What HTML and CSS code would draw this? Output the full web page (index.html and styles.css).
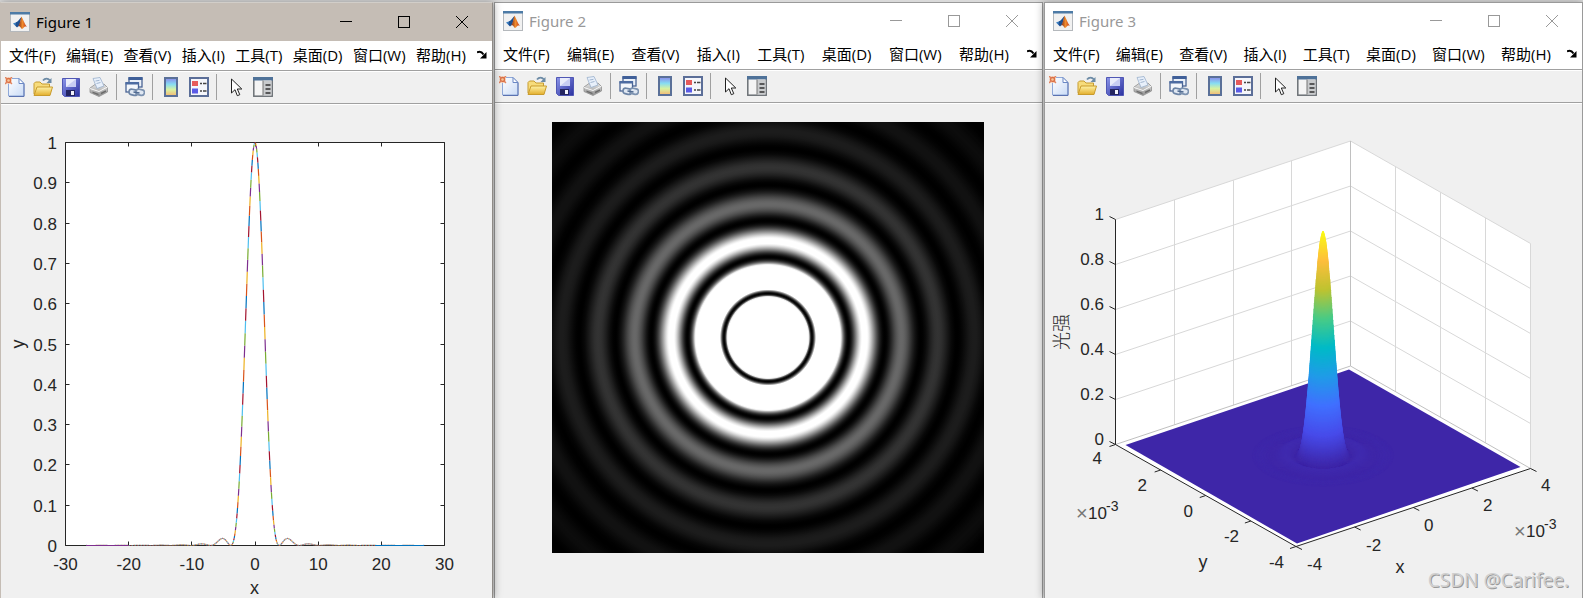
FILE: index.html
```html
<!DOCTYPE html>
<html lang="zh-CN">
<head>
<meta charset="utf-8">
<title>Figures</title>
<link rel="stylesheet" href="styles.css">
</head>
<body>
<svg class="sprite" aria-hidden="true">
  <defs>
    <linearGradient id="gDoc" x1="0" y1="0" x2="1" y2="1"><stop offset="0" stop-color="#fff"/><stop offset="1" stop-color="#c9dbf6"/></linearGradient>
    <linearGradient id="gFolder" x1="0" y1="0" x2="0" y2="1"><stop offset="0" stop-color="#fff3a8"/><stop offset="1" stop-color="#e3ae2c"/></linearGradient>
    <linearGradient id="gDisk" x1="0" y1="0" x2="1" y2="1"><stop offset="0" stop-color="#8d97ea"/><stop offset="1" stop-color="#2a30a0"/></linearGradient>
    <linearGradient id="gBar" x1="0" y1="0" x2="0" y2="1"><stop offset="0" stop-color="#8b86ea"/><stop offset=".35" stop-color="#86dcf3"/><stop offset=".65" stop-color="#d9f2a0"/><stop offset="1" stop-color="#f5b673"/></linearGradient>
    <linearGradient id="gPeak" x1="0" y1="0" x2="1" y2="0"><stop offset="0" stop-color="#7a2412"/><stop offset=".5" stop-color="#f08a2c"/><stop offset="1" stop-color="#c2361b"/></linearGradient>
    <linearGradient id="gGrey" x1="0" y1="0" x2="0" y2="1"><stop offset="0" stop-color="#e6e6e6"/><stop offset="1" stop-color="#8d8d8d"/></linearGradient>
  </defs>
  <symbol id="i-logo" viewBox="0 0 20 20">
    <rect x=".5" y=".5" width="19" height="19" fill="#f1f1f1" stroke="#b4b8bc"/>
    <rect x="0" y="0" width="20" height="2.500" fill="#4d7ba6"/>
    <path d="M3 11.500l4-1.500 2 2-2.500 3z" fill="#3d7fc0"/>
    <path d="M6 10.500c2-1 4-4 5.500-5.500l-2 8-2.500 2.500-1.500-2z" fill="#1d4f90"/>
    <path d="M11.500 4.500C13 7 14.500 12 17 15c-1.500-1-2.500-.5-4 1.500-1 .5-1.500.5-2-.5-1-1.500-1.500-2-3-1.500C10 12.500 10.500 7 11.500 4.500z" fill="url(#gPeak)"/>
  </symbol>
  <symbol id="i-new" viewBox="0 0 20 20">
    <path d="M3.500 1.500h10.500l5 5v12.500h-15.500z" fill="url(#gDoc)" stroke="#8fa8d8"/>
    <path d="M19 7v12.500H4" fill="none" stroke="#5a72b0"/>
    <path d="M14 1.500v5h5z" fill="#fff" stroke="#6b88c4"/>
    <rect x="0" y="0" width="7" height="7" fill="#f3d9c9"/>
    <path d="M0 0l2 2M7 0L5 2M0 7l2-2M7 7L5 5" stroke="#e08460" stroke-width="1.300"/>
    <circle cx="3.500" cy="3.500" r="2" fill="#f6c89c" stroke="#dc6f44" stroke-width="1.300"/>
  </symbol>
  <symbol id="i-open" viewBox="0 0 20 20">
    <path d="M10 3.500c2-2.500 5-2.500 7 0" fill="none" stroke="#6d8ba6" stroke-width="1.800"/>
    <path d="M18.500 1v5h-5z" fill="#6d8ba6"/>
    <path d="M1 17V6.500l1.500-1.500h4.500l2 2h7.500v10z" fill="#f7dc7c" stroke="#c79c30"/>
    <path d="M1 18.500L4 10h15.500l-2.500 8.500z" fill="url(#gFolder)" stroke="#c99b2c"/>
  </symbol>
  <symbol id="i-save" viewBox="0 0 20 20">
    <path d="M1.500 1.500h17v18H3.500l-2-2z" fill="url(#gDisk)" stroke="#5057b4"/>
    <path d="M5 2h10v8H5z" fill="#e9ecfb"/><path d="M5 10L15 2v8z" fill="#c7cdf3"/>
    <path d="M5 13h9v6H5z" fill="#23245f"/><path d="M10 14h3v4h-3z" fill="#f2f3fc"/>
  </symbol>
  <symbol id="i-print" viewBox="0 0 20 20">
    <path d="M1 11l5-3.500 2 2 7-2.500 3.500 3.500v4.500L10 19.500 1 15.500z" fill="url(#gGrey)" stroke="#909090" stroke-width=".8"/>
    <path d="M4 1.500l7-1 4 8.500-7 2.500z" fill="#e8f0fb" stroke="#9bb0cc" stroke-width=".8"/>
    <path d="M6.500 4l4-.7M7.500 6.500l4-1" stroke="#8fa6c4" stroke-width=".8"/>
    <path d="M1 11.500l9 3 8.500-4.500" fill="none" stroke="#f8f8f8"/>
    <path d="M3.500 14.500l6 2.300v1.500l-6-2.400z" fill="#6c6c6c"/><path d="M12 16.500l5-2.500" stroke="#6b6b6b" stroke-width="1.500"/>
  </symbol>
  <symbol id="i-link" viewBox="0 0 20 20">
    <rect x="4" y="1" width="13" height="9" fill="#eaf0f8" stroke="#4a6494" stroke-width="1.300"/><rect x="3.500" y="0" width="14" height="3" fill="#3f5f98"/>
    <rect x="1" y="6" width="12.500" height="9" fill="#f4f7fb" stroke="#4a6494" stroke-width="1.300"/><rect x=".5" y="5" width="13.500" height="2.500" fill="#4d6ca2"/>
    <rect x="4" y="12.500" width="8.500" height="5.500" rx="2.700" fill="#dfe7f2" stroke="#6c84a6" stroke-width="1.700" transform="rotate(12 8 15)"/>
    <rect x="11" y="12.500" width="8.500" height="5.500" rx="2.700" fill="#dfe7f2" stroke="#7c92b0" stroke-width="1.700" transform="rotate(12 15 15)"/>
    <path d="M8.500 15l6 1" stroke="#506a90" stroke-width="1.500"/>
  </symbol>
  <symbol id="i-colorbar" viewBox="0 0 20 20">
    <rect x="4" y="1" width="12" height="18" fill="url(#gBar)" stroke="#5a7098" stroke-width="2"/>
  </symbol>
  <symbol id="i-legend" viewBox="0 0 20 20">
    <rect x="1" y="1" width="18" height="18" fill="#f5f6fb" stroke="#5b6e98" stroke-width="2"/>
    <rect x="3" y="4" width="6" height="5" fill="#e65a5a"/><rect x="3" y="11.500" width="6" height="5" fill="#5a5ae6"/>
    <path d="M11 6.500h2M14 6.500h3.500M11 14h2M14 14h3.500" stroke="#444" stroke-width="1.300"/>
  </symbol>
  <symbol id="i-pointer" viewBox="0 0 20 20">
    <path d="M6.500 2v14l3.500-3.300 2.300 6 2.500-1-2.500-5.700h4.500z" fill="#fff" stroke="#222"/>
  </symbol>
  <symbol id="i-inspect" viewBox="0 0 20 20">
    <rect x=".8" y=".8" width="18.400" height="18.400" fill="#f4f4f4" stroke="#6b7075" stroke-width="1.500"/>
    <rect x="0" y="0" width="20" height="3.500" fill="#4f7299"/>
    <rect x="10" y="3.500" width="8.500" height="15" fill="#c9cbcd"/><path d="M10 3.500v15" stroke="#777"/>
    <path d="M12.500 8h5M12.500 12h5M12.500 16h5" stroke="#333" stroke-width="1.500"/>
  </symbol>
  <symbol id="i-dock" viewBox="0 0 10 10">
    <path d="M0 2.500C2.500 1 5 2 6.500 4.500" fill="none" stroke="#000" stroke-width="2"/><path d="M9.500 2v6.500H3z" fill="#000"/>
  </symbol>
  <symbol id="i-min" viewBox="0 0 12 12"><path d="M0 5.500h12" stroke="currentColor"/></symbol>
  <symbol id="i-max" viewBox="0 0 12 12"><rect x=".5" y=".5" width="11" height="11" fill="none" stroke="currentColor"/></symbol>
  <symbol id="i-close" viewBox="0 0 12 12"><path d="M0 0l12 12M12 0L0 12" stroke="currentColor"/></symbol>
</svg>

<template id="bars">
  <nav class="menubar">
    <div class="menus">
      <button>文件(F)</button><button>编辑(E)</button><button>查看(V)</button><button>插入(I)</button><button>工具(T)</button><button>桌面(D)</button><button>窗口(W)</button><button>帮助(H)</button>
    </div>
    <button class="dock" aria-label="停靠"><svg><use href="#i-dock"/></svg></button>
  </nav>
  <div class="toolbar">
    <button aria-label="新建"><svg><use href="#i-new"/></svg></button>
    <button aria-label="打开"><svg><use href="#i-open"/></svg></button>
    <button aria-label="保存"><svg><use href="#i-save"/></svg></button>
    <button aria-label="打印"><svg><use href="#i-print"/></svg></button>
    <span class="sep"></span>
    <button aria-label="链接绘图"><svg><use href="#i-link"/></svg></button>
    <span class="sep"></span>
    <button aria-label="颜色栏"><svg><use href="#i-colorbar"/></svg></button>
    <button aria-label="图例"><svg><use href="#i-legend"/></svg></button>
    <span class="sep"></span>
    <button aria-label="编辑绘图"><svg><use href="#i-pointer"/></svg></button>
    <button aria-label="属性检查器"><svg><use href="#i-inspect"/></svg></button>
  </div>
</template>
<template id="controls">
  <div class="controls">
    <button aria-label="最小化"><svg><use href="#i-min"/></svg></button>
    <button aria-label="最大化"><svg><use href="#i-max"/></svg></button>
    <button aria-label="关闭"><svg><use href="#i-close"/></svg></button>
  </div>
</template>

<main class="desktop">
  <section class="window active">
    <header class="titlebar"><svg class="logo"><use href="#i-logo"/></svg><h2>Figure 1</h2></header>
    <svg class="plot" id="plot1" viewBox="1 105 491 493"></svg>
  </section>
  <section class="window middle">
    <header class="titlebar"><svg class="logo"><use href="#i-logo"/></svg><h2>Figure 2</h2></header>
    <svg class="plot" id="plot2" viewBox="495 104 547 494"></svg>
  </section>
  <section class="window front">
    <header class="titlebar"><svg class="logo"><use href="#i-logo"/></svg><h2>Figure 3</h2></header>
    <svg class="plot" id="plot3" viewBox="1045 104 537 494"></svg>
  </section>
</main>
<p class="watermark">CSDN @Carifee.</p>
<script src="script.js"></script>
</body>
</html>
```
FILE: styles.css
```css
* { box-sizing: border-box; }
body {
  margin: 0;
  height: 100vh;
  overflow: hidden;
  background: #dadada;
  font-family: "Open Sans", "Noto Sans CJK SC", sans-serif;
}
.sprite { position: absolute; width: 0; height: 0; }
button { border: 0; padding: 0; background: none; font: inherit; color: inherit; }
.desktop {
  display: grid;
  grid-template-columns: 494fr 550fr 539fr;
  height: 100%;
  padding-top: 2px;
}
.window {
  display: flex;
  flex-direction: column;
  min-width: 0;
  min-height: 0;
  background: #f0f0f0;
  border: 1px solid #9a9a9a;
  border-bottom: 0;
}
.window.active {
  position: relative;
  z-index: 1;
  margin-right: 1px;
  border-color: #c5bdb5;
  border-right-color: #8f8b87;
  border-top-color: #d2cec9;
  box-shadow: 1px 0 8px rgba(0, 0, 0, .35);
}
.window.middle { margin-right: 1px; }
.window.front { position: relative; z-index: 1; box-shadow: -1px 0 8px rgba(0, 0, 0, .3); }
.titlebar {
  display: flex;
  align-items: center;
  flex: none;
  height: 37px;
  padding: 0 0 1px 8px;
  background: #fff;
  color: #999;
}
.active .titlebar { height: 38px; padding-left: 9px; background: #c5bdb5; color: #000; }
.logo { width: 20px; height: 20px; }
.titlebar h2 { flex: 1; margin: 0 0 0 6px; font-family: "Noto Sans", sans-serif; font-size: 15px; font-weight: 400; line-height: 20px; }
.controls { display: flex; padding-right: 1px; }
.controls button { display: grid; place-items: center; width: 58px; height: 36px; }
.controls svg { width: 12px; height: 12px; }
.menubar {
  display: flex;
  align-items: center;
  flex: none;
  height: 30px;
  padding: 0 5px 2px 8px;
  background: #fff;
  border-bottom: 1px solid #a0a0a0;
  color: #000;
  font-size: 15px;
  line-height: 20px;
}
.menus { display: flex; flex: 1; justify-content: space-between; }
.menus button { white-space: nowrap; }
.dock { display: flex; margin-left: 16px; }
.active .dock { margin-left: 11px; }
.middle .dock { margin-left: 18px; }
.dock svg { width: 10px; height: 10px; }
.toolbar {
  display: flex;
  align-items: center;
  flex: none;
  gap: 8px;
  height: 33px;
  padding: 0 0 2px 4px;
  border-top: 1px solid #fff;
  border-bottom: 1px solid #a0a0a0;
}
.toolbar button { display: flex; }
.toolbar svg { width: 20px; height: 20px; }
.sep { width: 1px; height: 26px; margin-left: -1px; background: #a0a0a0; }
.plot { flex: 1; min-height: 0; width: 100%; border-top: 1px solid #fff; }
.plot text { font-family: "Liberation Sans", Arial, sans-serif; font-size: 17px; fill: #262626; }
.plot .label { font-size: 18px; }
.plot .sup { font-size: 14px; }
.plot .times { fill: #777; font-size: 20px; }
.plot .cjk { font-family: "Noto Sans CJK SC", sans-serif; font-size: 18px; font-weight: 300; }
.end { text-anchor: end; }
.mid { text-anchor: middle; }
.axis { fill: none; stroke: #262626; }
.grid { fill: none; stroke: #d8d8d8; }
.edge { fill: none; stroke: #c0c0c0; }
.watermark {
  position: absolute;
  z-index: 2;
  right: 14px;
  bottom: 4px;
  margin: 0;
  color: #cfcfcf;
  font-family: "Noto Sans", sans-serif;
  font-size: 19px;
  line-height: 28px;
  text-shadow: 1px 1px 0 #999;
}
```
FILE: script.js
```js
document.querySelectorAll('.window').forEach(w => {
  const bar = w.querySelector('.titlebar');
  bar.append(document.getElementById('controls').content.cloneNode(true));
  bar.after(document.getElementById('bars').content.cloneNode(true));
});

// Bessel function J1 by its integral form
function j1(x) {
  const n = 64;
  let s = 0;
  for (let k = 0; k < n; k++) {
    const t = Math.PI * (k + 0.5) / n;
    s += Math.cos(t - x * Math.sin(t));
  }
  return s / n;
}
// Airy pattern intensity
function airy(x) {
  if (Math.abs(x) < 1e-6) return 1;
  const v = 2 * j1(x) / x;
  return v * v;
}
const line = (x1, y1, x2, y2) => `M${x1} ${y1}L${x2} ${y2}`;
const text = (x, y, s, cls = '') => `<text x="${x}" y="${y}" class="${cls}">${s}</text>`;

function drawCurve() {
  const L = 65.5, R = 444.5, T = 142.5, B = 545.5;
  const px = v => L + (v + 30) / 60 * (R - L);
  const py = v => B - v * (B - T);
  let ticks = '', labels = '';
  for (let v = -30; v <= 30; v += 10) {
    const x = Math.floor(px(v)) + 0.5;
    ticks += line(x, B, x, B - 4) + line(x, T, x, T + 4);
    labels += text(px(v), 570, v, 'mid');
  }
  for (let i = 0; i <= 10; i++) {
    const y = Math.floor(py(i / 10)) + 0.5;
    ticks += line(L, y, L + 4, y) + line(R, y, R - 4, y);
    labels += text(57, Math.round(y + 6), i / 10, 'end');
  }
  const colors = ['#0072bd', '#d95319', '#edb120', '#7e2f8e', '#77ac30', '#4dbeee', '#a2142f'];
  const paths = colors.map(() => '');
  const step = 0.067;
  let i = 0;
  for (let v = -26.75; v < 26.75; v += step, i++) {
    paths[i % 7] += line(px(v).toFixed(2), py(airy(v)).toFixed(2), px(v + step).toFixed(2), py(airy(v + step)).toFixed(2));
  }
  document.getElementById('plot1').innerHTML =
    `<rect x="${L}" y="${T}" width="${R - L}" height="${B - T}" fill="#fff"/>` +
    `<path class="axis" d="M${L} ${T}H${R}V${B}H${L}Z${ticks}"/>` +
    paths.map((d, k) => `<path d="${d}" fill="none" stroke="${colors[k]}" stroke-width="1.200"/>`).join('') +
    `<path d="M${px(-26.75)} 545.500H${px(-20)}" stroke="#7e2f8e"/><path d="M${px(19)} 545.500H${px(26.75)}" stroke="#0072bd"/>` + labels +
    text(254.5, 594, 'x', 'mid label') +
    `<text class="mid label" transform="translate(24 344) rotate(-90)">y</text>`;
}

function drawRings() {
  const scale = 11.48, max = 306;
  let stops = '';
  for (let r = 0; r <= max; r++) {
    const g = Math.round(Math.min(1, airy(r / scale) * 255) * 255);
    stops += `<stop offset="${r / max}" stop-color="rgb(${g},${g},${g})"/>`;
  }
  document.getElementById('plot2').innerHTML =
    `<defs><radialGradient id="rings" gradientUnits="userSpaceOnUse" cx="768" cy="337.5" r="${max}">${stops}</radialGradient></defs>` +
    `<rect x="552" y="122" width="432" height="431" fill="url(#rings)"/>`;
}

const parula = [[62, 38, 168], [71, 75, 234], [64, 112, 255], [32, 155, 232], [0, 186, 199], [72, 203, 134], [190, 195, 48], [254, 190, 60], [249, 251, 21]];
function color(z) {
  const p = Math.min(z, 0.9999) * 8, k = Math.floor(p), f = p - k;
  return 'rgb(' + parula[k].map((c, n) => Math.round(c + (parula[k + 1][n] - c) * f)).join(',') + ')';
}

function drawSurface() {
  const mix = (a, b, t) => [a[0] + (b[0] - a[0]) * t, a[1] + (b[1] - a[1]) * t];
  const left = [1115.5, 444.5], back = [1350.5, 366], right = [1530.5, 468.5], front = [1296, 546.5];
  const h = 225;
  let grid = '', ticks = '', body = '';
  for (let k = 1; k < 4; k++) {
    for (const [a, b] of [[left, back], [back, right]]) {
      const p = mix(a, b, k / 4);
      const x = Math.floor(p[0]) + 0.5;
      grid += line(x, p[1], x, p[1] - h);
    }
  }
  for (let k = 0; k <= 5; k++) {
    const d = h * k / 5;
    if (k) grid += `M${left[0]} ${left[1] - d}L${back[0]} ${back[1] - d}L${right[0]} ${right[1] - d}`;
    ticks += line(left[0], left[1] - d, left[0] - 6, left[1] - d - 3);
  }
  grid += line(right[0], right[1], right[0], right[1] - h);
  for (let k = 0; k <= 4; k++) {
    const p = mix(front, right, k / 4), q = mix(left, front, k / 4);
    ticks += line(p[0], p[1], p[0] + 6, p[1] + 3) + line(q[0], q[1], q[0] - 6, q[1] + 2);
  }
  for (let r = 9.6; r > 0; r -= r > 4 ? 0.1 : 0.012) {
    const z = airy(r);
    body += `<ellipse cx="1323" cy="${(456 - z * h).toFixed(2)}" rx="${(r * 7.4).toFixed(2)}" ry="${(r * 3.2).toFixed(2)}" fill="${color(r > 4 ? z * 0.7 : z)}"/>`;
  }
  let labels = '';
  [['1', 220], ['0.8', 265], ['0.6', 310], ['0.4', 355], ['0.2', 400], ['0', 445]].forEach(([s, y]) => labels += text(1104, y, s, 'end'));
  [['4', 1102, 464], ['2', 1147, 491], ['0', 1193, 517], ['-2', 1239, 542], ['-4', 1284, 568]].forEach(([s, x, y]) => labels += text(x, y, s, 'end'));
  [['4', 1541, 491], ['2', 1483, 511], ['0', 1424, 531], ['-2', 1366, 551], ['-4', 1307, 570]].forEach(([s, x, y]) => labels += text(x, y, s));
  for (const [x, y] of [[1089, 519], [1527, 537]]) {
    labels += text(x - 13, y + 1, '×', 'times') + text(x - 1, y, '10') + text(x + 17, y - 8, '-3', 'sup');
  }
  document.getElementById('plot3').innerHTML =
    `<path fill="#fff" d="M${left}V${left[1] - h}L${back[0]} ${back[1] - h}L${right[0]} ${right[1] - h}V${right[1]}L${front}Z"/>` +
    `<path class="grid" d="${grid}"/>` +
    `<path class="edge" d="M${left}L${back}L${right}M${back}V${back[1] - h}"/>` +
    `<path fill="#3e26a8" d="M1125.500 445L1349 369.500L1520.500 467L1297 543.500Z"/>` + body +
    `<path class="axis" d="M${left[0]} ${left[1] - h}V${left[1]}L${front}L${right}${ticks}"/>` + labels +
    text(1400, 573, 'x', 'mid label') + text(1203, 568, 'y', 'mid label') +
    `<text class="mid cjk" transform="translate(1068 332) rotate(-90)">光强</text>`;
}

drawCurve();
drawRings();
drawSurface();
```
